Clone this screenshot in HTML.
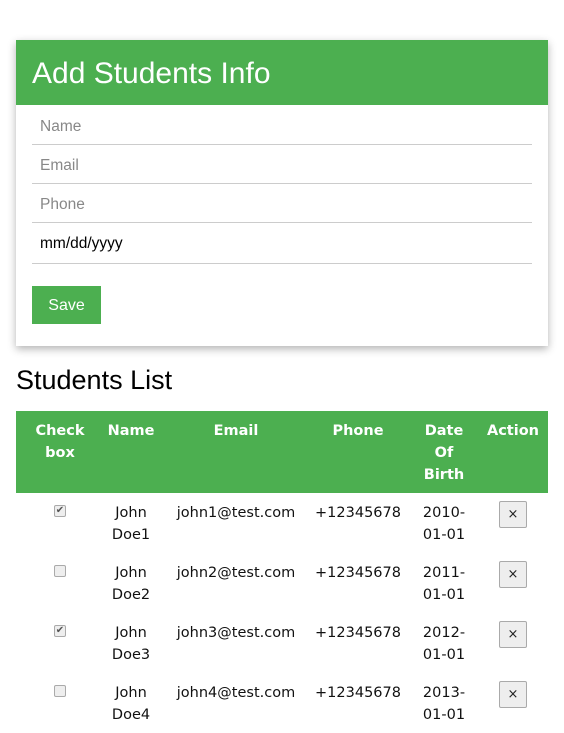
<!DOCTYPE html>
<html><head><style>
*{margin:0;padding:0;box-sizing:border-box}
body{width:564px;height:733px;background:#fff;position:relative;overflow:hidden;font-family:"DejaVu Sans",Verdana,sans-serif}
.card{position:absolute;left:16px;top:40px;width:532px;height:306px;background:#fff;box-shadow:0 3px 8px rgba(0,0,0,.3)}
.hd{height:65px;background:#4caf50;color:#fff;font-family:"Liberation Sans",sans-serif;font-size:30px;padding:17px 0 0 16px}
.inp{position:absolute;left:16px;width:500px;border-bottom:1px solid #ccc;font-family:"Liberation Sans",sans-serif;font-size:15.5px;color:#888;padding-left:8px;padding-top:3px}
.save{position:absolute;left:16px;top:246px;width:69px;height:38px;background:#4caf50;color:#fff;font-family:"Liberation Sans",sans-serif;font-size:16px;text-align:center;line-height:40px}
.t{position:absolute;left:16px;top:365px;font-family:"Liberation Sans",sans-serif;font-size:27px;color:#000}
.th{position:absolute;left:16px;top:411px;width:532px;height:82px;background:#4caf50}
.c{position:absolute;text-align:center;font-size:14.5px;line-height:22px;color:#111}
.h{color:#fff;font-weight:bold;font-size:14.5px}
.cb{position:absolute;width:12px;height:12px;border:1px solid #aaa;border-radius:2px;background:#eee;font-size:10px;line-height:10px;text-align:center;color:#555}
.x{position:absolute;width:28px;height:27px;border:1px solid #aaa;border-radius:2px;background:#eee;font-size:13px;text-align:center;line-height:25px;color:#222}
</style></head><body>
<div class="card">
<div class="hd">Add Students Info</div>
<div class="inp" style="top:75px;height:30px">Name</div>
<div class="inp" style="top:114px;height:30px">Email</div>
<div class="inp" style="top:153px;height:30px">Phone</div>
<div class="inp" style="top:192px;height:32px;color:#000;padding-top:3px">mm/dd/yyyy</div>
<div class="save">Save</div>
</div>
<div class="t">Students List</div>
<div class="th"></div>
<div class="c h" style="left:28px;width:64px;top:420px">Check<br>box</div>
<div class="c h" style="left:100px;width:62px;top:420px">Name</div>
<div class="c h" style="left:176px;width:120px;top:420px">Email</div>
<div class="c h" style="left:310px;width:96px;top:420px">Phone</div>
<div class="c h" style="left:416px;width:56px;top:420px">Date<br>Of<br>Birth</div>
<div class="c h" style="left:483px;width:60px;top:420px">Action</div>

<div class="cb" style="left:54px;top:505px">✔</div>
<div class="c" style="left:100px;width:62px;top:502px">John<br>Doe1</div>
<div class="c" style="left:166px;width:140px;top:502px">john1@test.com</div>
<div class="c" style="left:308px;width:100px;top:502px">+12345678</div>
<div class="c" style="left:416px;width:56px;top:502px">2010-<br>01-01</div>
<div class="x" style="left:499px;top:501px">×</div>

<div class="cb" style="left:54px;top:565px"></div>
<div class="c" style="left:100px;width:62px;top:562px">John<br>Doe2</div>
<div class="c" style="left:166px;width:140px;top:562px">john2@test.com</div>
<div class="c" style="left:308px;width:100px;top:562px">+12345678</div>
<div class="c" style="left:416px;width:56px;top:562px">2011-<br>01-01</div>
<div class="x" style="left:499px;top:561px">×</div>

<div class="cb" style="left:54px;top:625px">✔</div>
<div class="c" style="left:100px;width:62px;top:622px">John<br>Doe3</div>
<div class="c" style="left:166px;width:140px;top:622px">john3@test.com</div>
<div class="c" style="left:308px;width:100px;top:622px">+12345678</div>
<div class="c" style="left:416px;width:56px;top:622px">2012-<br>01-01</div>
<div class="x" style="left:499px;top:621px">×</div>

<div class="cb" style="left:54px;top:685px"></div>
<div class="c" style="left:100px;width:62px;top:682px">John<br>Doe4</div>
<div class="c" style="left:166px;width:140px;top:682px">john4@test.com</div>
<div class="c" style="left:308px;width:100px;top:682px">+12345678</div>
<div class="c" style="left:416px;width:56px;top:682px">2013-<br>01-01</div>
<div class="x" style="left:499px;top:681px">×</div>
</body></html>
